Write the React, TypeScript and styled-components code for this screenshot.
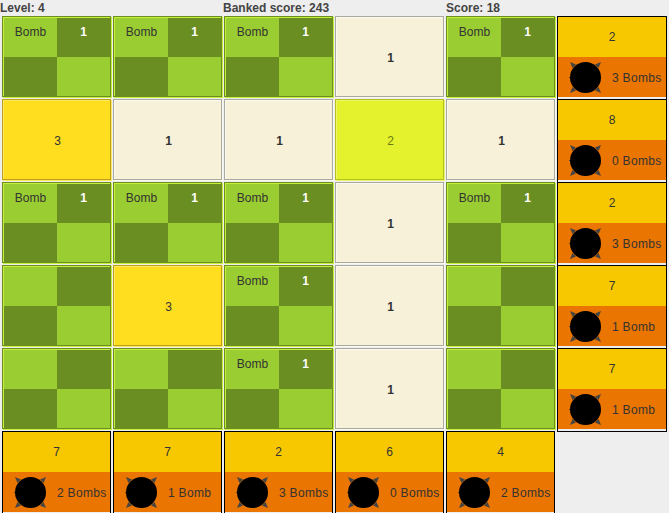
import * as React from "react";
import styled, { createGlobalStyle } from "styled-components";

type CellKind = "flagged" | "hidden" | "one" | "two" | "three";

type Hint = {
  points: number;
  bombs: number;
};

const CELLS: CellKind[][] = [
  ["flagged", "flagged", "flagged", "one", "flagged"],
  ["three", "one", "one", "two", "one"],
  ["flagged", "flagged", "flagged", "one", "flagged"],
  ["hidden", "three", "flagged", "one", "hidden"],
  ["hidden", "hidden", "flagged", "one", "hidden"],
];

const ROW_HINTS: Hint[] = [
  { points: 2, bombs: 3 },
  { points: 8, bombs: 0 },
  { points: 2, bombs: 3 },
  { points: 7, bombs: 1 },
  { points: 7, bombs: 1 },
];

const COLUMN_HINTS: Hint[] = [
  { points: 7, bombs: 2 },
  { points: 7, bombs: 1 },
  { points: 2, bombs: 3 },
  { points: 6, bombs: 0 },
  { points: 4, bombs: 2 },
];

const GlobalStyle = createGlobalStyle`
  html, body {
    margin: 0;
    padding: 0;
    background: #eeeeee;
  }
  body {
    font-family: "Liberation Sans", Arial, sans-serif;
    font-size: 12px;
    color: #333333;
  }
`;

const Page = styled.div`
  width: 669px;
  height: 513px;
  overflow: hidden;
`;

const ScoreBar = styled.div`
  display: grid;
  grid-template-columns: 223px 223px 223px;
  height: 16px;
  line-height: 17px;
  font-weight: bold;
  color: #444444;
`;

const Board = styled.div`
  display: grid;
  grid-template-columns: repeat(5, 109px) 110px;
  grid-auto-rows: 81px;
  gap: 2px;
  padding-left: 2px;
`;

const Checker = styled.div`
  display: grid;
  grid-template-columns: 53px 53px;
  grid-template-rows: 39px 39px;
  padding: 1px 0 0 1px;
  border: 1px solid #6b8e23;
  background: #c6ee3a;
  box-shadow: 1px 1px 0 #c6ee3a;
`;

const Square = styled.div<{ $dark: boolean }>`
  display: flex;
  align-items: center;
  justify-content: center;
  padding-bottom: 11px;
  background: ${(p) => (p.$dark ? "#6b8e23" : "#9acd32")};
  color: ${(p) => (p.$dark ? "#ffffff" : "#333333")};
  font-weight: ${(p) => (p.$dark ? "bold" : "normal")};
`;

const Revealed = styled.div<{ $kind: CellKind }>`
  --edge: ${(p) =>
    p.$kind === "three" ? "#ffe95e" : p.$kind === "two" ? "#eef76a" : "#fbfaf0"};
  display: flex;
  align-items: center;
  justify-content: center;
  padding: 2px 0 0 2px;
  border: 1px solid
    ${(p) => (p.$kind === "three" ? "#bd9f1a" : p.$kind === "two" ? "#b4c01c" : "#a9a9a0")};
  box-shadow:
    1px 1px 0 var(--edge),
    inset 1px 1px 0 var(--edge);
  background: ${(p) =>
    p.$kind === "three" ? "#ffdd1f" : p.$kind === "two" ? "#e4f22e" : "#f6f1d8"};
  color: ${(p) => (p.$kind === "two" ? "#6b7a10" : "#333333")};
  font-weight: ${(p) => (p.$kind === "one" ? "bold" : "normal")};
`;

const HintCard = styled.div`
  display: grid;
  grid-template-rows: 40px 40px;
  height: 82px;
  border: 1px solid #000000;
`;

const HintPoints = styled.div`
  display: flex;
  align-items: center;
  justify-content: center;
  background: #f7c800;
`;

const HintBombs = styled.div`
  display: flex;
  align-items: center;
  gap: 10px;
  padding-left: 11px;
  background: #ea7500;
`;

const HintLabel = styled.span`
  padding-top: 1px;
  letter-spacing: 0.3px;
  white-space: nowrap;
`;

const BombIcon = () => (
  <svg width="33" height="33" viewBox="0 0 33 33">
    <path d="M1 1l6 2.5-3.5 3.5zM32 1l-6 2.5 3.5 3.5zM1 32l6-2.5-3.5-3.5zM32 32l-6-2.5 3.5-3.5z" fill="#444444" />
    <path d="M0 16h2v1H0z" fill="#444444" />
    <circle cx="16.5" cy="16.5" r="15.5" fill="#000000" />
  </svg>
);

const HintTile: React.FC<Hint> = ({ points, bombs }) => (
  <HintCard>
    <HintPoints>{points}</HintPoints>
    <HintBombs>
      <BombIcon />
      <HintLabel>{bombs === 1 ? "1 Bomb" : `${bombs} Bombs`}</HintLabel>
    </HintBombs>
  </HintCard>
);

const Cell: React.FC<{ kind: CellKind }> = ({ kind }) => {
  if (kind === "hidden") {
    return (
      <Checker>
        <Square $dark={false} />
        <Square $dark />
        <Square $dark />
        <Square $dark={false} />
      </Checker>
    );
  }
  if (kind === "flagged") {
    return (
      <Checker>
        <Square $dark={false}>Bomb</Square>
        <Square $dark>1</Square>
        <Square $dark />
        <Square $dark={false} />
      </Checker>
    );
  }
  const value = kind === "one" ? 1 : kind === "two" ? 2 : 3;
  return <Revealed $kind={kind}>{value}</Revealed>;
};

export default function App() {
  return (
    <Page>
      <GlobalStyle />
      <ScoreBar>
        <span>Level: 4</span>
        <span>Banked score: 243</span>
        <span>Score: 18</span>
      </ScoreBar>
      <Board>
        {CELLS.map((row, r) => (
          <React.Fragment key={r}>
            {row.map((kind, c) => (
              <Cell key={c} kind={kind} />
            ))}
            <HintTile {...ROW_HINTS[r]} />
          </React.Fragment>
        ))}
        {COLUMN_HINTS.map((hint, c) => (
          <HintTile key={c} {...hint} />
        ))}
      </Board>
    </Page>
  );
}
